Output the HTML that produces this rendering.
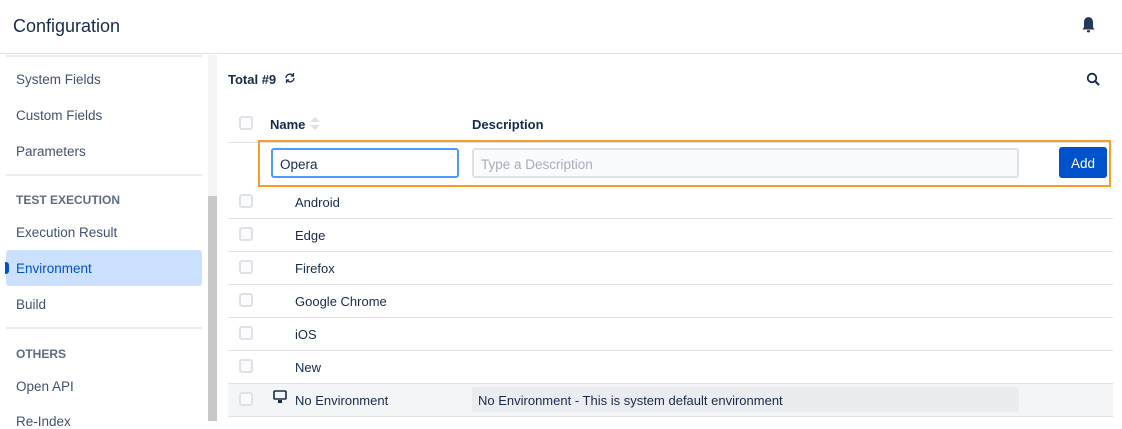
<!DOCTYPE html>
<html><head><style>
*{box-sizing:border-box;margin:0;padding:0}
body{width:1122px;height:421px;overflow:hidden;background:#fff;font-family:"Liberation Sans",sans-serif;color:#172b4d;position:relative;font-size:13px}
.a{position:absolute}
.hdr{left:0;top:0;width:1122px;height:54px;border-bottom:1px solid #dfe1e6}
.side{font-size:13.5px;color:#42526e}
.sec{font-size:12px;font-weight:bold;color:#5e6c84}
.sep{height:2px;background:#ebecf0;left:6px;width:196px}
.cb{width:14px;height:14px;border:2px solid #dfe1e6;border-radius:3px;background:#fafbfc;left:239px}
.rl{left:228px;width:885px;height:1px;background:#dfe1e6}
.nm{left:295px;font-size:13px}
</style></head><body>
<div class="a hdr"></div>
<div class="a" style="left:13px;top:16px;font-size:18px;color:#172b4d">Configuration</div>
<svg class="a" style="left:1081px;top:16px" width="15" height="18" viewBox="0 0 13 16"><path d="M6.5 1C4 1 2.5 3 2.5 5.5V10L1 12H12L10.5 10V5.5C10.5 3 9 1 6.5 1Z" fill="#253858"/><rect x="5" y="12.5" width="3" height="2" rx="1" fill="#253858"/></svg>
<div class="a" style="left:6px;top:55px;width:196px;height:2px;background:#ebecf0"></div>
<div class="a" style="left:208px;top:55px;width:9px;height:366px;background:#f4f5f7"></div>
<div class="a" style="left:208px;top:196px;width:9px;height:225px;background:#c8c8c8"></div>
<div class="a side" style="left:16px;top:72px">System Fields</div>
<div class="a side" style="left:16px;top:108px">Custom Fields</div>
<div class="a side" style="left:16px;top:144px">Parameters</div>
<div class="a sep" style="top:174px"></div>
<div class="a sec" style="left:16px;top:193px">TEST EXECUTION</div>
<div class="a side" style="left:16px;top:225px">Execution Result</div>
<div class="a" style="left:6px;top:250px;width:196px;height:36px;background:#cce0ff;border-radius:3px"></div>
<div class="a" style="left:5px;top:262px;width:4px;height:12px;background:#0052cc;border-radius:0 3px 3px 0"></div>
<div class="a side" style="left:16px;top:261px;color:#0052cc">Environment</div>
<div class="a side" style="left:16px;top:297px">Build</div>
<div class="a sep" style="top:327px"></div>
<div class="a sec" style="left:16px;top:347px">OTHERS</div>
<div class="a side" style="left:16px;top:379px">Open API</div>
<div class="a side" style="left:16px;top:414px">Re-Index</div>

<div class="a" style="left:228px;top:72px;font-weight:bold;font-size:13px">Total #9</div>
<svg class="a" style="left:284px;top:72px" width="12" height="12" viewBox="0 0 12 12"><path d="M2 6A4 4 0 0 1 9 3.5M10 6A4 4 0 0 1 3 8.5" fill="none" stroke="#172b4d" stroke-width="1.3"/><path d="M9.5 1V4H6.8M2.5 11V8H5.2" fill="none" stroke="#172b4d" stroke-width="1.2"/></svg>
<svg class="a" style="left:1086px;top:72px" width="14" height="14" viewBox="0 0 14 14"><circle cx="6" cy="6" r="4.3" fill="none" stroke="#172b4d" stroke-width="1.8"/><path d="M9 9L12.5 12.5" stroke="#172b4d" stroke-width="2" stroke-linecap="round"/></svg>
<div class="a cb" style="top:116px"></div>
<div class="a" style="left:270px;top:117px;font-weight:bold">Name</div>
<svg class="a" style="left:309px;top:116px" width="12" height="15" viewBox="0 0 12 15"><path d="M6 1L11 6H1Z M6 14L11 9H1Z" fill="#dfe1e6"/></svg>
<div class="a" style="left:472px;top:117px;font-weight:bold">Description</div>
<div class="a rl" style="top:142px"></div>
<div class="a" style="left:258px;top:140px;width:853px;height:47px;border:2px solid #f99c2a"></div>
<div class="a" style="left:271px;top:148px;width:188px;height:30px;border:2px solid #4c9aff;border-radius:3px;padding:7px 0 0 7px;font-size:13.5px">Opera</div>
<div class="a" style="left:472px;top:148px;width:547px;height:30px;border:2px solid #dfe1e6;border-radius:3px;background:#fafbfc;padding:7px 0 0 7px;color:#a5adba;font-size:13.5px">Type a Description</div>
<div class="a" style="left:1059px;top:147px;width:48px;height:31px;background:#0052cc;border-radius:3px;color:#fff;text-align:center;line-height:33px;font-size:13.5px">Add</div>

<div class="a cb" style="top:194px"></div><div class="a nm" style="top:195px">Android</div><div class="a rl" style="top:218px"></div>
<div class="a cb" style="top:227px"></div><div class="a nm" style="top:228px">Edge</div><div class="a rl" style="top:251px"></div>
<div class="a cb" style="top:260px"></div><div class="a nm" style="top:261px">Firefox</div><div class="a rl" style="top:284px"></div>
<div class="a cb" style="top:293px"></div><div class="a nm" style="top:294px">Google Chrome</div><div class="a rl" style="top:317px"></div>
<div class="a cb" style="top:326px"></div><div class="a nm" style="top:327px">iOS</div><div class="a rl" style="top:350px"></div>
<div class="a cb" style="top:359px"></div><div class="a nm" style="top:360px">New</div><div class="a rl" style="top:383px"></div>
<div class="a" style="left:228px;top:384px;width:885px;height:32px;background:#f4f5f7"></div>
<div class="a cb" style="top:392px"></div>
<svg class="a" style="left:273px;top:390px" width="14" height="14" viewBox="0 0 14 14"><rect x="1" y="1" width="12" height="8" rx="1" fill="none" stroke="#172b4d" stroke-width="1.6"/><rect x="5" y="10" width="4" height="3" fill="#172b4d"/></svg>
<div class="a nm" style="top:393px">No Environment</div>
<div class="a" style="left:472px;top:387px;width:547px;height:25px;background:#ebecf0;border-radius:3px;padding:6px 0 0 6px">No Environment - This is system default environment</div>
<div class="a rl" style="top:416px"></div>
</body></html>
